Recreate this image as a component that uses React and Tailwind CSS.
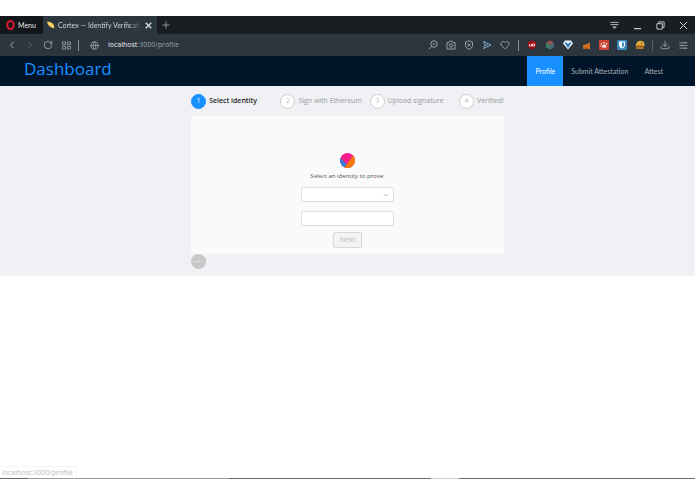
import { ChevronLeft, ChevronRight, RotateCw, Globe, Heart, Download, ChevronDown } from 'lucide-react'

const STEPS = [
  { id: 1, title: 'Select identity' },
  { id: 2, title: 'Sign with Ethereum' },
  { id: 3, title: 'Upload signature' },
  { id: 4, title: 'Verified!' },
]

const MENU = [
  { id: 'profile', label: 'Profile' },
  { id: 'submit',  label: 'Submit Attestation' },
  { id: 'attest',  label: 'Attest' },
]

function Icon({ children, size = 10 }) {
  return (
    <svg width={size} height={size} viewBox="0 0 20 20" fill="none" stroke="currentColor" strokeWidth="1.8" aria-hidden="true">
      {children}
    </svg>
  )
}

const TOOLS = [
  { label: 'Search in page', art: <Icon><circle cx="12" cy="8" r="6.5" /><path d="M7 13l-5 5M9 8h6" /></Icon> },
  { label: 'Snapshot', art: <Icon><path d="M2 5h4l2-3h4l2 3h4v13H2z" /><circle cx="10" cy="11" r="3.5" /></Icon> },
  { label: 'Ad blocker', art: <Icon><path d="M10 1.5l7 2.5v7c0 4-4 6.5-7 7.500-3-1-7-3.500-7-7.500V4z" /><path d="M7 7l6 6M13 7l-6 6" /></Icon> },
  { label: 'My Flow', art: <span className="text-[#86b4d0]"><Icon><path d="M3 3l15 7-15 7 3-7zM6 10h6" /></Icon></span> },
  { label: 'Bookmarks', art: <Heart size={10} strokeWidth={2} /> },
]

const EXTENSIONS = [
  {
    label: 'Blocker',
    art: (
      <Icon>
        <path d="M10 1l8 3v7c0 4-5 7-8 8-3-1-8-4-8-8V4z" fill="#a10d16" stroke="none" />
        <path d="M5 8v4h4V8M11 8h4v4h-4z" stroke="#f3dede" />
      </Icon>
    ),
  },
  {
    label: 'Cube',
    art: (
      <Icon>
        <path d="M10 1l8 4-8 5-8-5z" fill="#9b5352" stroke="none" />
        <path d="M2 5l8 5v9l-8-4z" fill="#3e7f68" stroke="none" />
        <path d="M18 5l-8 5v9l8-4z" fill="#4c6779" stroke="none" />
      </Icon>
    ),
  },
  {
    label: 'Vault',
    art: (
      <Icon>
        <path d="M4 1h12l4 6-10 12L0 7z" fill="#e9f4fb" stroke="none" />
        <path d="M3 5l7 11 7-11h-4l-3 4-3-4z" fill="#2377b5" stroke="none" />
      </Icon>
    ),
  },
  {
    label: 'Wallet',
    art: (
      <Icon size={9}>
        <path d="M2 9l9-2 6-5 1 16H3z" fill="#d8731d" stroke="none" />
        <path d="M7 18l2-5 3 5z" fill="#7a431c" stroke="none" />
      </Icon>
    ),
  },
  {
    label: 'Paw',
    art: (
      <Icon>
        <rect width="20" height="20" rx="2" fill="#cf4335" stroke="none" />
        <path d="M6 12c2-4 7-4 9 0 1 3-2 4-4 3-3 1-6 0-5-3z" fill="#f7e2df" stroke="none" />
        <path d="M5 6v3M10 4v3M15 6v3M3 11v2" stroke="#f7e2df" strokeWidth="2.500" />
      </Icon>
    ),
  },
  {
    label: 'Passwords',
    art: (
      <Icon>
        <rect width="20" height="20" rx="2" fill="#3a86bd" stroke="none" />
        <path d="M4 3h12v7c0 4-4 6-6 7-2-1-6-3-6-7z" fill="#fff" stroke="none" />
        <path d="M10 5h4v5c0 2-2 4-4 5z" fill="#3a86bd" stroke="none" />
      </Icon>
    ),
  },
  {
    label: 'Cookies',
    art: (
      <Icon>
        <path d="M4 5c2-5 13-5 14 1 2 3 1 6-1 7H3C1 10 2 7 4 5z" fill="#e3b13c" stroke="none" />
        <path d="M1 10h16v8H3z" fill="#b9762b" stroke="none" />
        <path d="M5 13h2M11 13h2M12 6h2" stroke="#5d3a17" strokeWidth="2.500" />
      </Icon>
    ),
  },
]

const WINDOW_CONTROLS = [
  { label: 'Tab menu', art: <Icon size={9}><path d="M1 3h18M1 8h18M6 13h8l-4 4z" /></Icon> },
  { label: 'Minimize', art: <Icon size={9}><path d="M2 17h16" strokeWidth="2.500" /></Icon> },
  { label: 'Restore', art: <Icon size={9}><path d="M2 6h12v12H2zM6 6V2h12v12h-4" strokeWidth="2" /></Icon> },
  { label: 'Close', art: <Icon size={9}><path d="M2 2l16 16M18 2L2 18" strokeWidth="2.200" /></Icon> },
]

function ToolButton({ label, children }) {
  return (
    <button aria-label={label} className="w-[18px] h-5 flex shrink-0 items-center justify-center">
      {children}
    </button>
  )
}

function BrowserChrome() {
  return (
    <div className="text-[#d5d8da]">
      {/* Tab strip */}
      <div className="flex h-[18px] items-stretch bg-[#1a1d21] font-[Lato,sans-serif] text-[7px]">
        <button className="flex w-[43px] shrink-0 items-center gap-[3px] bg-[#14171a] pl-[6px] text-[#e2e4e5]">
          <svg width="9" height="10" viewBox="0 0 18 20" aria-hidden="true">
            <ellipse cx="9" cy="10" rx="6.500" ry="8" fill="none" stroke="#e2182d" strokeWidth="4" />
          </svg>
          Menu
        </button>
        <div className="flex w-[114px] shrink-0 items-center bg-[#2c363f] pl-1">
          <svg width="8" height="8" viewBox="0 0 16 16" className="shrink-0" aria-hidden="true">
            <path d="M0 1l7 1 6 4 2 9-7-2-6-5z" fill="#f0c34c" />
            <path d="M3 3l11 10" stroke="#fbe6a6" strokeWidth="2" />
          </svg>
          <span className="ml-[3px] w-[84px] whitespace-nowrap bg-linear-to-r from-[#dfe2e4] from-85% to-[#2c363f] bg-clip-text text-transparent">
            Cortex — Identify Verificati
          </span>
          <button aria-label="Close tab" className="flex w-3 shrink-0 justify-center">
            <Icon size={7}><path d="M2 2l16 16M18 2L2 18" strokeWidth="4" /></Icon>
          </button>
        </div>
        <button aria-label="New tab" className="flex w-[18px] items-center justify-center text-[#a5a8aa]">
          <Icon size={8}><path d="M10 1v18M1 10h18" strokeWidth="2" /></Icon>
        </button>
        <div className="ml-auto flex">
          {WINDOW_CONTROLS.map(c => (
            <button key={c.label} aria-label={c.label} className="flex w-[23px] items-center justify-center">
              {c.art}
            </button>
          ))}
        </div>
      </div>

      {/* Address bar */}
      <div className="flex h-[22px] items-center bg-[#2c363f] px-[3px] text-[#a3aaaf]">
        <ToolButton label="Back"><ChevronLeft size={12} strokeWidth={2} /></ToolButton>
        <span className="text-[#5a646c]"><ToolButton label="Forward"><ChevronRight size={12} strokeWidth={2} /></ToolButton></span>
        <ToolButton label="Reload"><RotateCw size={10} strokeWidth={2} /></ToolButton>
        <ToolButton label="Speed dial">
          <Icon size={9}><path d="M1 2h7v6H1zM12 2h7v6h-7zM1 12h7v6H1zM12 12h7v6h-7z" /></Icon>
        </ToolButton>
        <span className="ml-[3px] h-[11px] w-px bg-[#8b9297]" />
        <span className="ml-[6px] flex"><ToolButton label="Site information"><Globe size={9} strokeWidth={2} /></ToolButton></span>
        <button aria-label="Address" className="ml-[5px] text-[7px] text-[#9aa1a6]">
          <span className="text-[#eceeef]">localhost</span>:3000/profile
        </button>
        <div className="ml-auto flex items-center">
          {TOOLS.map(t => <ToolButton key={t.label} label={t.label}>{t.art}</ToolButton>)}
          <span className="mx-1 h-[11px] w-px bg-[#8b9297]" />
          {EXTENSIONS.map(t => <ToolButton key={t.label} label={t.label}>{t.art}</ToolButton>)}
          <span className="mx-[3px] h-[11px] w-px bg-[#566068]" />
          <ToolButton label="Downloads"><Download size={10} strokeWidth={2} /></ToolButton>
          <ToolButton label="Easy setup">
            <Icon size={9}><path d="M1 4h18M1 10h18M1 16h18M13 2v4M6 8v4M13 14v4" /></Icon>
          </ToolButton>
        </div>
      </div>
    </div>
  )
}

function Header() {
  return (
    <header className="flex h-[30px] items-stretch justify-between bg-[#001529] px-6">
      <h1 className="text-[17px] leading-[26px] font-medium text-[#1890ff]">Dashboard</h1>
      <nav className="flex font-[Lato,sans-serif] text-[7px]">
        {MENU.map(m => (
          <a
            key={m.id}
            href={`#${m.id}`}
            className={`flex items-center px-2 ${
              m.id === 'profile' ? 'bg-[#1890ff] text-white' : 'text-[#a6adb4]'
            }`}
          >
            {m.label}
          </a>
        ))}
      </nav>
    </header>
  )
}

function Steps() {
  return (
    <ol className="flex h-[30px] items-center text-[7px]">
      {STEPS.map(s => (
        <li key={s.id} className="flex flex-1 items-center gap-[3px] whitespace-nowrap last:flex-none">
          <span
            className={`flex size-[15px] items-center justify-center rounded-full border ${
              s.id === 1 ? 'border-[#1890ff] bg-[#1890ff] text-white' : 'border-[#cfcfcf] bg-white text-[#bfbfbf]'
            }`}
          >
            {s.id}
          </span>
          <span className={s.id === 1 ? 'font-semibold text-[#262626]' : 'text-[#999a9c]'}>{s.title}</span>
        </li>
      ))}
    </ol>
  )
}

function IdentityForm() {
  return (
    <form className="flex flex-col items-center bg-[#fafafa] pt-[37px] pb-[6px]">
      <svg width="15" height="15" viewBox="0 0 30 30" aria-hidden="true">
        <clipPath id="disc"><circle cx="15" cy="15" r="15" /></clipPath>
        <g clipPath="url(#disc)">
          <rect width="30" height="30" fill="#fa1e8c" />
          <path d="M0 9l14 14-5 7H0z" fill="#347fd8" />
          <path d="M30 0L8 30h22z" fill="#f77a0b" />
        </g>
      </svg>
      <label htmlFor="identity" className="mt-[3px] text-[6px] leading-[10px] text-[#555]">
        Select an identity to prove:
      </label>
      <div className="relative mt-[6px] w-[93px]">
        <select id="identity" className="block h-[15px] w-full appearance-none rounded-xs border border-[#dedede] bg-white" />
        <ChevronDown size={8} className="pointer-events-none absolute right-1 top-1 text-[#a8a8a8]" />
      </div>
      <input type="text" aria-label="Identity value" className="mt-[9px] h-[15px] w-[93px] rounded-xs border border-[#dedede] bg-white" />
      <button type="button" disabled className="mt-[6px] h-4 rounded-xs border border-[#d9d9d9] bg-[#f3f3f3] px-[6px] text-[7px] leading-[14px] text-[#bdbdbd]">
        Next
      </button>
    </form>
  )
}

export default function App() {
  return (
    <div className="flex min-h-screen flex-col bg-white pt-4 pb-[15px] font-['Open_Sans',sans-serif]">
      <BrowserChrome />
      <Header />
      <main className="bg-[#f0f1f5] pb-[7px]">
        <div className="mx-auto w-[45%]">
          <Steps />
          <IdentityForm />
          <button aria-label="More" className="flex size-[15px] items-center justify-center rounded-full bg-[#c8c8c8]">
            <span className="w-[11px] border-t border-dotted border-[#e8e8e8]" />
          </button>
        </div>
      </main>

      {/* Status bubble and taskbar edge */}
      <footer className="mt-auto">
        <div className="w-fit border-t border-r border-[#f3f3f3] pl-[2px] pr-[3px] text-[7px] leading-[11px] text-[#bcbcbc]">
          localhost:3000/profile
        </div>
        <div className="flex h-px bg-[#6b6b6b]">
          <span className="w-[4%]" />
          <span className="w-[29%] bg-[#9b9b9b]" />
          <span className="w-[29%]" />
          <span className="w-[4%] bg-[#cdcdcd]" />
        </div>
      </footer>
    </div>
  )
}
